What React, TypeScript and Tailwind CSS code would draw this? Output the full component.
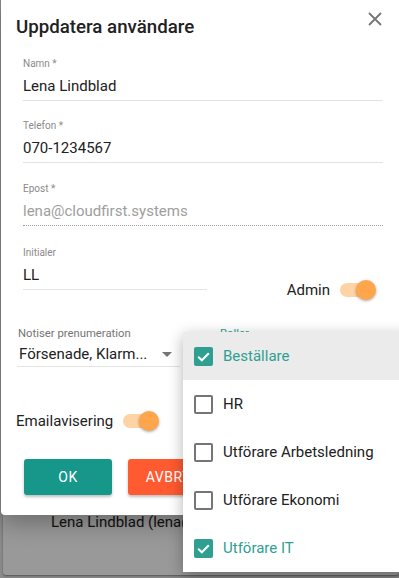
import React from 'react'

function Toggle() {
    return (
        <div className="relative w-[36px] h-[20px] shrink-0">
            <div className="absolute left-0 top-[3px] w-[34px] h-[14px] rounded-full bg-[#ffd3a3]" />
            <div className="absolute right-0 top-0 w-[20px] h-[20px] rounded-full bg-[#ffa64d] shadow-[0_1px_3px_rgba(0,0,0,0.35)]" />
        </div>
    )
}

function Field({ label, value, muted, dotted }: { label: string; value: string; muted?: boolean; dotted?: boolean }) {
    return (
        <div className={`flex flex-col pb-[4px] ${dotted ? 'border-b border-dotted border-[#9e9e9e]' : 'border-b border-[#e3e3e3]'}`}>
            <span className="text-[10px] leading-[12px] text-[#8a8a8a]">{label}</span>
            <span className={`mt-[6px] text-[15px] leading-[20px] ${muted ? 'text-[#9e9e9e]' : 'text-[#212121]'}`}>{value}</span>
        </div>
    )
}

function CheckBox({ checked }: { checked: boolean }) {
    if (checked) {
        return (
            <svg width="19" height="19" viewBox="0 0 19 19" className="shrink-0">
                <rect x="0" y="0" width="19" height="19" rx="2" fill="#2e9f91" />
                <path d="M4.2 9.8 L7.8 13.3 L14.8 6.2" fill="none" stroke="white" strokeWidth="2" />
            </svg>
        )
    }
    return <div className="w-[19px] h-[19px] shrink-0 rounded-[2px] border-2 border-[#757575]" />
}

const roles = [
    { name: 'Beställare', checked: true },
    { name: 'HR', checked: false },
    { name: 'Utförare Arbetsledning', checked: false },
    { name: 'Utförare Ekonomi', checked: false },
    { name: 'Utförare IT', checked: true },
]

export default function App() {
    return (
        <div className="relative w-[399px] h-[578px] overflow-hidden font-['Roboto',sans-serif]">
            {/* page behind the dialog */}
            <div className="h-full bg-[#e6e6e6] pt-[470px] pl-[3px]">
                <div className="h-[105px] bg-white rounded-[3px] shadow-[0_1px_2px_rgba(0,0,0,0.4)] pt-[40px] pl-[48px]">
                    <span className="text-[15px] leading-[20px] text-[#222] whitespace-nowrap">Lena Lindblad (lena@cloudfirst.systems)</span>
                </div>
            </div>

            {/* backdrop */}
            <div className="absolute inset-0 bg-black/40" />

            {/* dialog */}
            <div className="absolute left-[1px] top-0 w-[404px] h-[515px] bg-white rounded-b-[4px] shadow-[0_8px_24px_rgba(0,0,0,0.3)]">
                <div className="flex items-start justify-between pl-[15px] pr-[23px]">
                    <h2 className="pt-[16px] text-[18.7px] leading-[22px] font-medium text-[#212121]">Uppdatera användare</h2>
                    <svg width="14" height="14" viewBox="0 0 14 14" className="mt-[12px]">
                        <path d="M1 1 L13 13 M13 1 L1 13" stroke="#757575" strokeWidth="1.8" />
                    </svg>
                </div>

                <div className="flex flex-col px-[22px] mt-[20px]">
                    <Field label="Namn *" value="Lena Lindblad" />
                    <div className="mt-[19px]">
                        <Field label="Telefon *" value="070-1234567" />
                    </div>
                    <div className="mt-[20px]">
                        <Field label="Epost *" value="lena@cloudfirst.systems" muted dotted />
                    </div>
                    <div className="mt-[21px] flex items-end">
                        <div className="w-[184px]">
                            <Field label="Initialer" value="LL" />
                        </div>
                        <div className="ml-auto flex items-center gap-[10px] mb-[-10px] mr-[7px]">
                            <span className="text-[15px] leading-[20px] text-[#212121]">Admin</span>
                            <Toggle />
                        </div>
                    </div>
                </div>

                <div className="flex mt-[37px] pl-[16px] pr-[22px] gap-[40px]">
                    <div className="w-[163px] flex flex-col border-b border-[#e3e3e3] pb-[2px]">
                        <span className="pl-[1px] text-[11.3px] leading-[13px] text-[#757575]">Notiser prenumeration</span>
                        <div className="mt-[4px] flex items-center justify-between pl-[2px] pr-[8px]">
                            <span className="text-[15px] leading-[20px] text-[#212121]">Försenade, Klarm...</span>
                            <svg width="10" height="5" viewBox="0 0 10 5">
                                <path d="M0 0 L10 0 L5 5 Z" fill="#757575" />
                            </svg>
                        </div>
                    </div>
                    <div className="flex-1 flex flex-col">
                        <span className="text-[11.3px] leading-[13px] text-[#2e9f91]">Roller</span>
                    </div>
                </div>

                <div className="flex items-center gap-[10px] mt-[44px] pl-[15px]">
                    <span className="text-[15px] leading-[20px] text-[#212121]">Emailavisering</span>
                    <Toggle />
                </div>

                <div className="flex gap-[16px] mt-[28px] pl-[23px]">
                    <button className="w-[88px] h-[36px] rounded-[3px] bg-[#17968a] text-white text-[14px] tracking-[0.5px] shadow-[0_2px_3px_rgba(0,0,0,0.25)]">OK</button>
                    <button className="w-[90px] h-[36px] rounded-[3px] bg-[#ff5a30] text-white text-[14px] tracking-[0.5px] shadow-[0_2px_3px_rgba(0,0,0,0.25)]">AVBRYT</button>
                </div>
            </div>

            {/* roles menu */}
            <div className="absolute left-[183px] top-[332px] w-[230px] bg-white shadow-[0_4px_14px_rgba(0,0,0,0.3)]">
                {roles.map((r, i) => (
                    <div key={r.name} className={`h-[48px] flex items-center gap-[10px] pl-[11px] ${i === 0 ? 'bg-[#ebebeb]' : ''}`}>
                        <CheckBox checked={r.checked} />
                        <span className={`text-[15px] leading-[20px] whitespace-nowrap ${r.checked ? 'text-[#2e9f91]' : 'text-[#212121]'}`}>{r.name}</span>
                    </div>
                ))}
            </div>
        </div>
    )
}
